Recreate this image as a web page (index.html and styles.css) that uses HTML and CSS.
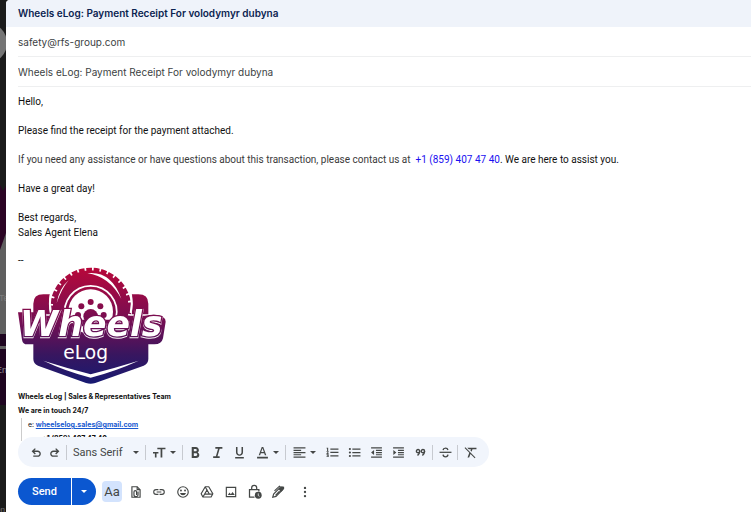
FILE: index.html
```
<!DOCTYPE html>
<html lang="en">
<head>
  <meta charset="UTF-8">
  <title>Wheels eLog: Payment Receipt For volodymyr dubyna</title>
  <link rel="stylesheet" href="styles.css">
</head>
<body>

  <!-- page behind the compose window -->
  <svg class="backdrop" viewBox="0 0 6 512" preserveAspectRatio="xMinYMin slice" aria-hidden="true">
    <rect width="6" height="512" fill="#1b1b1b"/>
    <circle cx="-13" cy="43" r="20" fill="#757575"/>
    <path d="M0 185l3 6 3-5v50L0 252z" fill="#2b0424"/>
    <path d="M0 250l6-17v101H0z" fill="#5f5f5f"/>
    <rect y="334" width="6" height="71" fill="#1e0520"/>
    <rect y="346" width="6" height="3" fill="#5f5f5f"/>
    <text x="-1" y="301" font-size="9" fill="#7c7c7c">Te</text>
    <text x="-4" y="373" font-size="9" fill="#8a8a8a">En</text>
    <text x="-4" y="512" font-size="8" fill="#777">on</text>
  </svg>

  <main class="compose">
    <h2 class="title">Wheels eLog: Payment Receipt For volodymyr dubyna</h2>

    <div class="fields">
      <input class="field" type="text" aria-label="To" value="safety@rfs-group.com">
      <input class="field" type="text" aria-label="Subject" value="Wheels eLog: Payment Receipt For volodymyr dubyna">
    </div>

    <div class="message">
      <p>Hello,</p>
      <p>Please find the receipt for the payment attached.</p>
      <p><span class="soft">If you need any assistance or have questions about this transaction, please contact us at</span>&nbsp; <span class="phone">+1 (859) 407 47 40</span>. We are here to assist you.</p>
      <p>Have a great day!</p>
      <p>Best regards,<br>Sales Agent Elena</p>
      <div class="dashes">--</div>

      <div class="signature">
        <svg class="logo" viewBox="54 36 444 351" role="img" aria-label="Wheels eLog">
          <defs>
            <linearGradient id="brand" gradientUnits="userSpaceOnUse" x1="0" y1="38" x2="0" y2="386">
              <stop offset="0" stop-color="#b8083a"/>
              <stop offset="0.5" stop-color="#6e0f55"/>
              <stop offset="0.75" stop-color="#38165f"/>
              <stop offset="1" stop-color="#171a72"/>
            </linearGradient>
          </defs>
          <g fill="url(#brand)">
            <path d="M100 178v-32q0-28 30-28h20q-5 28 0 60zM445 178v-32q0-28-30-28h-20q5 28 0 60z"/>
            <circle cx="272" cy="160" r="114"/>
            <circle cx="272" cy="160" r="115" fill="none" stroke="url(#brand)" stroke-width="14" stroke-dasharray="17 5"/>
            <path d="M54 172h50l10 10h320q60-10 63 18l-8 50q-4 18-26 18h-18v44q0 14-14 20l-145 52q-14 5-28 0l-144-52q-14-6-14-20v-44H82q-14 0-16-14z"/>
          </g>
          <g fill="none" stroke="#fff">
            <path d="M152 118q-5 28 1 56M393 118q5 28-1 56" stroke-width="6"/>
            <path d="M196 188a78 78 0 1 1 152 0" stroke-width="5"/>
          </g>
          <path d="M206 76q-28 24-36 68 16-45 36-68zM262 55q72-8 102 77-36-68-102-77z" fill="#fff"/>
          <circle cx="272" cy="170" r="67" fill="#fff"/>
          <g fill="url(#brand)">
            <circle cx="272" cy="141" r="9"/>
            <circle cx="244" cy="154" r="9"/>
            <circle cx="301" cy="154" r="9"/>
            <circle cx="234" cy="180" r="9"/>
            <circle cx="311" cy="180" r="9"/>
            <circle cx="272" cy="184" r="22"/>
            <path d="M205 194h140v20H205z"/>
          </g>
          <text class="logo-name" x="60" y="244">Wheels</text>
          <text class="logo-sub" x="190" y="311">eLog</text>
          <path d="M130 317q70 22 142 41 72-19 144-41-70 32-144 51-74-19-142-51z" fill="#fff"/>
        </svg>
        <div>Wheels eLog | Sales &amp; Representatives Team</div>
        <div>We are in touch 24/7</div>
        <div class="contacts">
          <div><span class="label">e:</span> <a href="mailto:wheelselog.sales@gmail.com">wheelselog.sales@gmail.com</a></div>
          <div class="tel">+1 (859) 407 47 40</div>
        </div>
      </div>
    </div>

    <div class="format-bar">
      <button class="tool" aria-label="Undo"><svg viewBox="0 0 24 24"><path d="M6 20v-2.500h8.100q1.400 0 2.400-1 1-1 1-2.300t-1-2.200q-1-1-2.400-1H8l2.700 2.700L9 15.500 3 9.700 9 4l1.700 1.700L8 8.500h6.100q2.500 0 4.200 1.600Q20 11.800 20 14.200t-1.700 4.200Q16.600 20 14.100 20z"/></svg></button>
      <button class="tool flush" aria-label="Redo"><svg viewBox="0 0 24 24"><path d="M18 20v-2.500H9.900q-1.400 0-2.400-1-1-1-1-2.300t1-2.200q1-1 2.400-1H16l-2.700 2.700 1.700 1.800 6-5.800L15 4l-1.700 1.700L16 8.500H9.900q-2.500 0-4.200 1.600Q4 11.800 4 14.200t1.700 4.200Q7.400 20 9.900 20z"/></svg></button>
      <span class="sep"></span>
      <div class="font-pick">
        <select class="font-select" aria-label="Font"><option>Sans Serif</option></select>
        <span class="caret"></span>
      </div>
      <span class="sep"></span>
      <button class="tool menu" aria-label="Size"><svg viewBox="0 0 24 24"><path d="M8 3v3.200h6V21h3.200V6.200H23V3zM0 11v3h3.500v7h3v-7H10v-3z"/></svg><span class="caret"></span></button>
      <span class="sep"></span>
      <button class="tool" aria-label="Bold"><svg viewBox="0 0 24 24"><path d="M5 2v20h8c3.700 0 6-2.200 6-5.500 0-2.200-1.100-3.900-3-4.700 1.400-.8 2.200-2.200 2.200-3.900C18.200 4.500 16 2 12.600 2zm3.900 3.500h3.300c1.300 0 2.100.9 2.100 2.200s-.8 2.200-2.100 2.200H8.900zm0 7.700h3.900c1.500 0 2.400 1 2.400 2.600s-.9 2.700-2.400 2.700H8.900z"/></svg></button>
      <button class="tool" aria-label="Italic"><svg viewBox="0 0 24 24"><path d="M8 2v3.200h5L9 18.800H4V22h12v-3.200h-4l4-13.600h5V2z"/></svg></button>
      <button class="tool" aria-label="Underline"><svg viewBox="0 0 24 24"><path d="M12 18c3.800 0 6.500-2.500 6.500-6.500V2h-2.800v9.600c0 2.300-1.400 3.900-3.700 3.900s-3.700-1.600-3.700-3.900V2H5.500v9.500C5.500 15.500 8.200 18 12 18zM4 20.500V23h16v-2.500z"/></svg></button>
      <button class="tool menu" aria-label="Text color"><svg viewBox="0 0 24 24"><path d="M10.600 2 5 17h2.600l1.300-3.800h6.200l1.300 3.800H19L13.400 2zm-1 9L12 4.300l2.400 6.700zM2 20h20v3H2z"/></svg><span class="caret"></span></button>
      <span class="sep"></span>
      <button class="tool menu" aria-label="Align"><svg viewBox="0 0 24 24"><path d="M1 2.500h22v2.300H1zM1 6.700h14V9H1zM1 10.900h22v2.300H1zM1 15h14v2.300H1zM1 19.200h22v2.300H1z"/></svg><span class="caret"></span></button>
      <button class="tool" aria-label="Numbered list"><svg viewBox="0 0 24 24"><path d="M1 17h2.500v.5H2v1h1.500v.5H1v1.500h4V15.500H1zm1-8h2V3H1v1.500h1zm-1 2h2.300L1 13.500V15h4v-1.500H3L5 11V9.500H1zM8 4.500v2.300h15V4.500zm0 15h15v-2.300H8zm0-6.500h15v-2.300H8z"/></svg></button>
      <button class="tool" aria-label="Bulleted list"><svg viewBox="0 0 24 24"><path d="M8 4.500h15v2.300H8zM8 10.900h15v2.300H8zM8 17.200h15v2.300H8z"/><circle cx="3.500" cy="5.600" r="2"/><circle cx="3.500" cy="12" r="2"/><circle cx="3.500" cy="18.400" r="2"/></svg></button>
      <button class="tool" aria-label="Indent less"><svg viewBox="0 0 24 24"><path d="M2 2.500h20v2.300H2zM11 6.700h11V9H11zM11 10.900h11v2.300H11zM11 15h11v2.300H11zM2 19.200h20v2.300H2zM7.500 7.500v9L2 12z"/></svg></button>
      <button class="tool" aria-label="Indent more"><svg viewBox="0 0 24 24"><path d="M2 2.500h20v2.300H2zM11 6.700h11V9H11zM11 10.900h11v2.300H11zM11 15h11v2.300H11zM2 19.200h20v2.300H2zM2.500 7.500v9L8 12z"/></svg></button>
      <button class="tool" aria-label="Quote"><svg viewBox="0 0 24 24"><g fill="none" stroke="currentColor" stroke-width="2.600"><circle cx="7.500" cy="9.500" r="3"/><circle cx="16.500" cy="9.500" r="3"/><path d="M10.500 9.500q0 4-4 8M19.500 9.500q0 4-4 8"/></g></svg></button>
      <span class="sep"></span>
      <button class="tool" aria-label="Strikethrough"><svg viewBox="0 0 24 24"><path d="M1 10.500h22v2.300H1z"/><path d="M16.500 7.500Q15.500 4 12 4 8 4 7.500 7.500M7.500 16q.5 4 4.500 4t4.500-4" fill="none" stroke="currentColor" stroke-width="2.600"/></svg></button>
      <span class="sep"></span>
      <button class="tool" aria-label="Remove formatting"><svg viewBox="0 0 24 24"><path d="M6 3h17v2.800h-7.300l-1.800 4.700-2-2 .9-2.700H8.800zM2.400 2.200 1 3.600l8.800 8.800L6.500 21h3l2.500-6.400 7.800 7.800 1.400-1.400z"/></svg></button>
    </div>

    <div class="action-bar">
      <div class="send-group">
        <button class="send">Send</button>
        <button class="send-more" aria-label="More send options"><span class="caret"></span></button>
      </div>
      <div class="actions">
        <button class="action active" aria-label="Formatting options">Aa</button>
        <button class="action" aria-label="Attach files"><svg viewBox="0 0 24 24"><g fill="none" stroke="currentColor" stroke-width="2"><path d="M5 3h9l5 5v13H5z"/><path d="M14 3v5h5M15.500 11v5.500a3.500 3.500 0 0 1-7 0v-4.500a2 2 0 0 1 4.500 0v5"/></g></svg></button>
        <button class="action" aria-label="Insert link"><svg viewBox="0 0 24 24"><path d="M3.900 12c0-1.700 1.400-3.100 3.100-3.100h4V7H7a5 5 0 0 0 0 10h4v-1.900H7A3.100 3.100 0 0 1 3.900 12zM8 13h8v-2H8zm9-6h-4v1.900h4a3.100 3.100 0 0 1 0 6.200h-4V17h4a5 5 0 0 0 0-10z"/></svg></button>
        <button class="action" aria-label="Insert emoji"><svg viewBox="0 0 24 24"><circle cx="12" cy="12" r="9" fill="none" stroke="currentColor" stroke-width="2"/><circle cx="8.500" cy="9.500" r="1.600"/><circle cx="15.500" cy="9.500" r="1.600"/><path d="M6.800 13.500h10.400q-1.200 4-5.200 4t-5.200-4z"/></svg></button>
        <button class="action" aria-label="Insert from Drive"><svg viewBox="0 0 24 24"><g fill="none" stroke="currentColor" stroke-width="2" stroke-linejoin="round"><path d="M9 3h6l7 12-3 5.500H5L2 15z"/><path d="M12 8.500 8 15.500h8z"/><path d="m12 8.500-3-5M8 15.500l-3 5M16 15.500h6"/></g></svg></button>
        <button class="action" aria-label="Insert photo"><svg viewBox="0 0 24 24"><path d="M4 4h16v16H4z" fill="none" stroke="currentColor" stroke-width="2"/><path d="m6.500 17 3-4 2.200 2.700 3-3.900 3.800 5.200z"/></svg></button>
        <button class="action" aria-label="Confidential mode"><svg class="lock" viewBox="0 0 24 24"><path d="M12 21H4V9h15v3M7.500 9V6a4 4 0 0 1 8 0v3" fill="none" stroke="currentColor" stroke-width="2"/><circle cx="18" cy="18" r="5.500"/><path d="M18 15v3.500l2 1.200" fill="none" stroke="#fff" stroke-width="1.200"/></svg></button>
        <button class="action" aria-label="Insert signature"><svg viewBox="0 0 24 24"><g fill="none" stroke="currentColor" stroke-width="2"><path d="m3 21 1.500-5.500L15 5l4 4L8.500 19.500z"/><path d="m6 10 8.500-8 3 2.500"/></g><path d="m13 7 5-5 4.500 1v4L17 12zM7 17l7-7 1.500 1.500-7 7z"/></svg></button>
      </div>
      <button class="action" aria-label="More options"><svg viewBox="0 0 24 24"><circle cx="12" cy="5" r="2"/><circle cx="12" cy="12" r="2"/><circle cx="12" cy="19" r="2"/></svg></button>
    </div>
  </main>

</body>
</html>
```
FILE: styles.css
```
* {
  box-sizing: border-box;
}
body {
  margin: 0;
  height: 100vh;
  display: flex;
  overflow: hidden;
  background-color: #1b1b1b;
  font-family: "Liberation Sans", Arial, sans-serif;
}
.backdrop {
  flex: none;
  width: 6px;
  height: 100%;
}
.compose {
  flex: 1;
  min-width: 0;
  display: flex;
  flex-direction: column;
  background-color: #fff;
  border-top-left-radius: 4px;
  overflow: hidden;
}

/* header and fields */
.title {
  flex: none;
  margin: 0;
  padding: 0 12px;
  background-color: #eff3fa;
  color: #0b2350;
  font-family: Inter, sans-serif;
  font-size: 10px;
  font-weight: 600;
  line-height: 27px;
}
.fields {
  flex: none;
  padding-left: 12px;
}
.field {
  display: block;
  width: 100%;
  height: 30px;
  padding: 0;
  border: none;
  border-bottom: 1px solid #eeeff0;
  color: #3c3f43;
  font-family: Inter, sans-serif;
  font-size: 10px;
  outline: none;
}

/* message text */
.message {
  flex: 1;
  min-height: 0;
  padding: 7px 12px 0;
  overflow: hidden;
  color: #111;
  font-family: Roboto, sans-serif;
  font-size: 10px;
  line-height: 15px;
}
.message p {
  margin: 0 0 14px;
}
.soft {
  color: #3a3a3a;
}
.phone {
  color: #1a10f0;
}
.message .dashes {
  line-height: 13px;
}
.signature {
  font-family: Inter, sans-serif;
  font-size: 7px;
  font-weight: bold;
  line-height: 14px;
}
.logo {
  display: block;
  width: 148px;
  height: 117px;
  margin-bottom: 6px;
}
.logo-name {
  font-family: "DejaVu Sans", sans-serif;
  font-size: 104px;
  font-weight: bold;
  font-style: italic;
  stroke: url(#brand);
  stroke-width: 8px;
  paint-order: stroke;
  fill: #fff;
  filter: drop-shadow(0 3px 0 #fff);
}
.logo-sub {
  font-family: "DejaVu Sans", sans-serif;
  font-size: 56px;
  font-weight: normal;
  fill: #fff;
}
.contacts {
  margin-left: 3px;
  padding-left: 6px;
  border-left: 1px solid #ccc;
}
.contacts .label {
  font-weight: normal;
}
.contacts a {
  color: #1a5ad0;
}
.contacts .tel {
  padding-left: 14px;
}

/* formatting toolbar, overlaps the end of the message */
.format-bar {
  flex: none;
  align-self: flex-start;
  position: relative;
  display: flex;
  align-items: center;
  gap: 4px;
  height: 30px;
  margin: -4px 12px 0;
  padding: 0 10px 0 9px;
  border-radius: 15px;
  background-color: #f1f5fc;
}
button {
  display: flex;
  align-items: center;
  justify-content: center;
  padding: 0;
  border: none;
  background: none;
  color: #444746;
  cursor: pointer;
}
button svg {
  display: block;
  width: 14px;
  height: 14px;
  fill: currentColor;
}
button .lock {
  width: 15px;
  height: 15px;
}
.tool {
  flex: none;
  width: 18px;
  height: 22px;
}
.tool svg {
  width: 13px;
  height: 13px;
}
.tool.flush {
  margin-left: -4px;
}
.tool.menu {
  width: 30px;
  gap: 4px;
}
.caret {
  border: 3px solid transparent;
  border-top-color: #444746;
  border-bottom: none;
}
.sep {
  width: 1px;
  height: 15px;
  margin: 0 -1px;
  background-color: #c7cad0;
}
.font-pick {
  display: flex;
  align-items: center;
  width: 72px;
  padding-left: 3px;
}
.font-select {
  flex: 1;
  min-width: 0;
  padding: 0;
  border: none;
  appearance: none;
  background: none;
  color: #444746;
  font-family: Roboto, sans-serif;
  font-size: 11px;
}
.font-pick .caret {
  margin-right: 3px;
}

/* send button and actions */
.action-bar {
  flex: none;
  display: flex;
  align-items: center;
  padding: 11px 12px 7px;
}
.send-group {
  display: flex;
  gap: 1px;
  margin-right: 6px;
}
.send,
.send-more {
  height: 27px;
  background-color: #0b57d0;
  color: #fff;
}
.send {
  width: 53px;
  border-radius: 14px 0 0 14px;
  font-family: Roboto, sans-serif;
  font-size: 11px;
  font-weight: 500;
}
.send-more {
  width: 24px;
  border-radius: 0 14px 14px 0;
}
.send-more .caret {
  border-top-color: #fff;
}
.actions {
  display: flex;
  justify-content: space-between;
  width: 186px;
  margin-right: 7px;
}
.action {
  width: 20px;
  height: 21px;
}
.action.active {
  border-radius: 4px;
  background-color: #d3e3fd;
  font-family: Roboto, sans-serif;
  font-size: 13px;
}
```
